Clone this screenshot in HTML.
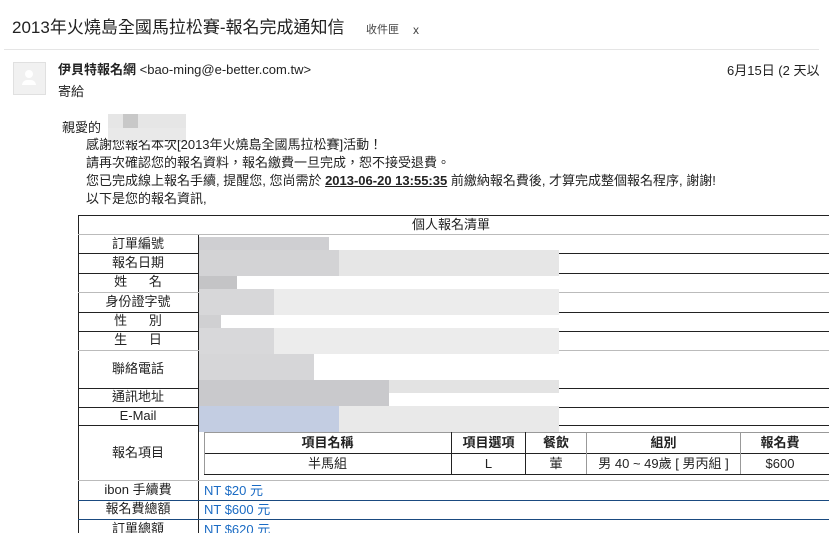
<!DOCTYPE html>
<html><head><meta charset="utf-8"><style>
body{margin:0;width:829px;height:550px;overflow:hidden;background:#fff;font-family:"Liberation Sans","Noto Sans CJK TC",sans-serif;color:#222;position:relative;line-height:16px}
.a{position:absolute;white-space:nowrap}
.t{font-size:13px;color:#222}
.h{position:absolute;height:0;border-top:1px solid #222}
.g{border-top-color:#bbb}
.v{position:absolute;width:0;border-left:1px solid #222}
.lab{position:absolute;left:78px;width:120px;text-align:center;font-size:13px}
.px{position:absolute;height:19px}
.blue{color:#1a6bc4;font-size:13px}
</style></head><body>
<div class="a" style="left:12px;top:18px;font-size:17px;line-height:20px;color:#222">2013年火燒島全國馬拉松賽-報名完成通知信</div>
<div class="a" style="left:366px;top:22px;font-size:11px;color:#444">收件匣</div>
<div class="a" style="left:413px;top:22px;font-size:12px;color:#444">x</div>
<div class="h" style="left:4px;top:49px;width:815px;border-top-color:#e5e5e5"></div>
<div class="a" style="left:13px;top:62px;width:31px;height:31px;background:#f1f1f1;border:1px solid #e0e0e0"></div>
<div class="a" style="left:25px;top:70px;width:8px;height:8px;border-radius:50%;background:#fff"></div>
<div class="a" style="left:22px;top:80px;width:14px;height:5px;border-radius:5px 5px 0 0;background:#fff"></div>
<div class="a t" style="left:58px;top:62px"><b>伊貝特報名網</b> &lt;bao-ming@e-better.com.tw&gt;</div>
<div class="a t" style="left:58px;top:84px">寄給</div>
<div class="a t" style="left:727px;top:63px">6月15日 (2 天以</div>
<div class="a t" style="left:62px;top:120px">親愛的</div>
<div class="a" style="left:108px;top:114px;width:78px;height:28px;background:#e6e6e6"></div>
<div class="a" style="left:123px;top:114px;width:15px;height:14px;background:#c8c8c8"></div>
<div class="a t" style="left:86px;top:137px">感謝您報名本次[2013年火燒島全國馬拉松賽]活動！</div>
<div class="a" style="left:108px;top:128px;width:78px;height:12px;background:#e9e9e9"></div>
<div class="a t" style="left:86px;top:155px">請再次確認您的報名資料，報名繳費一旦完成，恕不接受退費。</div>
<div class="a t" style="left:86px;top:173px">您已完成線上報名手續, 提醒您, 您尚需於 <b><u>2013-06-20 13:55:35</u></b> 前繳納報名費後, 才算完成整個報名程序, 謝謝!</div>
<div class="a t" style="left:86px;top:191px">以下是您的報名資訊,</div>

<div class="h" style="left:78px;top:215px;width:751px"></div>
<div class="a t" style="left:412px;top:217px">個人報名清單</div>
<div class="v" style="left:78px;top:215px;height:318px"></div>
<div class="v" style="left:198px;top:234px;height:299px"></div>
<div class="h g" style="left:78px;top:234px;width:751px"></div>
<div class="h" style="left:78px;top:253px;width:751px"></div>
<div class="h" style="left:78px;top:273px;width:751px"></div>
<div class="h g" style="left:78px;top:292px;width:751px"></div>
<div class="h" style="left:78px;top:312px;width:751px"></div>
<div class="h" style="left:78px;top:331px;width:751px"></div>
<div class="h g" style="left:78px;top:350px;width:751px"></div>
<div class="h" style="left:78px;top:388px;width:751px"></div>
<div class="h" style="left:78px;top:407px;width:751px"></div>
<div class="h" style="left:78px;top:425px;width:751px"></div>
<div class="h g" style="left:78px;top:480px;width:751px"></div>
<div class="h" style="left:78px;top:500px;width:751px;border-top-color:#1a4a80"></div>
<div class="h" style="left:78px;top:519px;width:751px;border-top-color:#1a4a80"></div>

<div class="lab" style="top:236px">訂單編號</div>
<div class="lab" style="top:255px">報名日期</div>
<div class="lab" style="top:274px">姓&nbsp;&nbsp;&nbsp;&nbsp;&nbsp;&nbsp;名</div>
<div class="lab" style="top:294px">身份證字號</div>
<div class="lab" style="top:313px">性&nbsp;&nbsp;&nbsp;&nbsp;&nbsp;&nbsp;別</div>
<div class="lab" style="top:332px">生&nbsp;&nbsp;&nbsp;&nbsp;&nbsp;&nbsp;日</div>
<div class="lab" style="top:361px">聯絡電話</div>
<div class="lab" style="top:389px">通訊地址</div>
<div class="lab" style="top:408px">E-Mail</div>
<div class="lab" style="top:445px">報名項目</div>
<div class="lab" style="top:482px">ibon 手續費</div>
<div class="lab" style="top:501px">報名費總額</div>
<div class="lab" style="top:521px">訂單總額</div>

<div class="px" style="left:199px;top:237px;width:130px;height:13px;background:#cfcfd2"></div>
<div class="px" style="left:199px;top:250px;width:360px;height:26px;background:#e6e6e6"></div>
<div class="px" style="left:199px;top:250px;width:140px;height:26px;background:#d3d3d5"></div>
<div class="px" style="left:199px;top:276px;width:38px;height:13px;background:#c4c4c6"></div>
<div class="px" style="left:199px;top:289px;width:360px;height:26px;background:#ececec"></div>
<div class="px" style="left:199px;top:289px;width:75px;height:26px;background:#d7d7d9"></div>
<div class="px" style="left:199px;top:315px;width:22px;height:13px;background:#d0d0d2"></div>
<div class="px" style="left:199px;top:328px;width:360px;height:26px;background:#ececec"></div>
<div class="px" style="left:199px;top:328px;width:75px;height:26px;background:#d8d8da"></div>
<div class="px" style="left:199px;top:354px;width:115px;height:26px;background:#d6d6d8"></div>
<div class="px" style="left:199px;top:380px;width:360px;height:13px;background:#e3e3e3"></div>
<div class="px" style="left:199px;top:380px;width:190px;height:26px;background:#c9c9cc"></div>
<div class="px" style="left:199px;top:406px;width:360px;height:26px;background:#e9e9e9"></div>
<div class="px" style="left:199px;top:406px;width:140px;height:26px;background:#c3cde2"></div>

<div class="h" style="left:204px;top:432px;width:625px;border-top-color:#999"></div>
<div class="h" style="left:204px;top:453px;width:625px"></div>
<div class="h" style="left:204px;top:474px;width:625px"></div>
<div class="v" style="left:204px;top:432px;height:42px;border-left-color:#999"></div>
<div class="v" style="left:451px;top:432px;height:42px"></div>
<div class="v" style="left:525px;top:432px;height:42px"></div>
<div class="v" style="left:586px;top:432px;height:42px;border-left-color:#999"></div>
<div class="v" style="left:740px;top:432px;height:42px;border-left-color:#999"></div>
<div class="a t" style="left:204px;width:247px;text-align:center;top:435px"><b>項目名稱</b></div>
<div class="a t" style="left:452px;width:73px;text-align:center;top:435px"><b>項目選項</b></div>
<div class="a t" style="left:526px;width:60px;text-align:center;top:435px"><b>餐飲</b></div>
<div class="a t" style="left:587px;width:153px;text-align:center;top:435px"><b>組別</b></div>
<div class="a t" style="left:741px;width:78px;text-align:center;top:435px"><b>報名費</b></div>
<div class="a t" style="left:204px;width:247px;text-align:center;top:456px">半馬組</div>
<div class="a t" style="left:452px;width:73px;text-align:center;top:456px">L</div>
<div class="a t" style="left:526px;width:60px;text-align:center;top:456px">葷</div>
<div class="a t" style="left:587px;width:153px;text-align:center;top:456px">男 40 ~ 49歲 [ 男丙組 ]</div>
<div class="a t" style="left:741px;width:78px;text-align:center;top:456px">$600</div>

<div class="a blue" style="left:204px;top:483px">NT $20 元</div>
<div class="a blue" style="left:204px;top:502px">NT $600 元</div>
<div class="a blue" style="left:204px;top:522px">NT $620 元</div>
<div class="a" style="left:0;top:533px;width:829px;height:17px;background:#fff"></div>
</body></html>
